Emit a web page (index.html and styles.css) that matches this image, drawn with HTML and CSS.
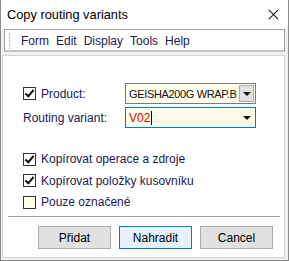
FILE: index.html
```html
<!DOCTYPE html>
<html lang="cs">
<head>
  <meta charset="UTF-8">
  <title>Copy routing variants</title>
  <link rel="stylesheet" href="styles.css">
</head>
<body>
  <div class="window">
    <div class="title-bar">
      <span class="title">Copy routing variants</span>
      <svg class="close" viewBox="0 0 12 12">
        <path d="M1 1L11 11M11 1L1 11"/>
      </svg>
    </div>
    <div class="menu-area">
      <div class="menu-bar">
        <span class="grip"></span>
        <span class="menu-item">Form</span>
        <span class="menu-item">Edit</span>
        <span class="menu-item">Display</span>
        <span class="menu-item">Tools</span>
        <span class="menu-item">Help</span>
      </div>
    </div>
    <div class="panel">
      <div class="form-row">
        <label class="field-label"><span class="check checked"></span>Product:</label>
        <div class="combo">
          <span class="combo-text tight">GEISHA200G WRAP.B</span>
          <span class="combo-btn"><span class="arrow"></span></span>
        </div>
      </div>
      <div class="form-row">
        <label class="field-label">Routing variant:</label>
        <div class="combo focused">
          <span class="combo-text red">V02<span class="caret"></span></span>
          <span class="combo-btn flat"><span class="arrow"></span></span>
        </div>
      </div>

      <div class="options">
        <label class="option"><span class="check checked"></span>Kopírovat operace a zdroje</label>
        <label class="option"><span class="check checked"></span>Kopírovat položky kusovníku</label>
        <label class="option"><span class="check empty"></span>Pouze označené</label>
      </div>

      <div class="separator"></div>

      <div class="buttons">
        <button class="btn">Přidat</button>
        <button class="btn default">Nahradit</button>
        <button class="btn">Cancel</button>
      </div>
    </div>
  </div>
</body>
</html>
```

FILE: styles.css
```css
* {
  box-sizing: border-box;
  margin: 0;
  padding: 0;
}

body {
  font-family: 'Liberation Sans', Arial, sans-serif;
  font-size: 12px;
  background: #fff;
}

.window {
  width: 289px;
  height: 261px;
  border: 1px solid #8c8c8c;
  border-top: none;
  background: #f0f0f0;
  display: flex;
  flex-direction: column;
}

.title-bar {
  flex: none;
  height: 29px;
  background: #fff;
  display: flex;
  align-items: center;
  justify-content: space-between;
  padding: 0 9px 1px 6px;
}

.title {
  font-size: 12.8px;
  color: #000;
}

.close {
  width: 11px;
  height: 11px;
  stroke: #111;
  stroke-width: 1.1;
  fill: none;
}

.menu-area {
  flex: none;
  padding: 0 3px;
}

.menu-bar {
  height: 23px;
  background: #fff;
  border: 1px solid #a0a0a0;
  border-bottom: 2px solid #c4c4c4;
  display: flex;
  align-items: center;
  padding: 2px 0 0 4px;
}

.grip {
  width: 1px;
  height: 16px;
  border-left: 1px dotted #a8a8a8;
  margin-right: 11px;
}

.menu-item {
  color: #1a1a4e;
  margin-right: 7px;
}

.panel {
  flex: 1;
  margin: 3px 3px 2px 1px;
  background: #fff;
  border: 1px solid #d4d4d4;
  padding: 27px 0 0 20px;
  display: flex;
  flex-direction: column;
}

.form-row {
  display: flex;
  align-items: center;
  height: 21px;
  margin-bottom: 3px;
}

.field-label {
  width: 102px;
  display: flex;
  align-items: center;
  color: #1a1a4e;
}

.check {
  width: 13px;
  height: 13px;
  border: 1px solid #333;
  background: #fff;
  margin-right: 5px;
  position: relative;
  flex: none;
}

.check.checked::after {
  content: '';
  position: absolute;
  left: 3px;
  top: 0;
  width: 3px;
  height: 7px;
  border: solid #111;
  border-width: 0 2px 2px 0;
  transform: rotate(40deg);
}

.check.empty {
  background: #fefde8;
}

.combo {
  width: 131px;
  height: 21px;
  border: 1px solid #7a7a7a;
  background: #fffeea;
  display: flex;
  align-items: center;
  gap: 1px;
  padding: 0 1px 0 3px;
}

.combo.focused {
  border-color: #0078d7;
}

.combo-text {
  flex: 1;
  color: #111;
  white-space: nowrap;
  overflow: hidden;
  display: flex;
  align-items: center;
}

.combo-text.tight {
  font-size: 11px;
  letter-spacing: -0.35px;
}

.combo-text.red {
  color: #e80000;
}

.caret {
  width: 1px;
  height: 14px;
  background: #000;
  margin-left: 1px;
}

.combo-btn {
  width: 15px;
  height: 17px;
  background: #e1e1e1;
  border: 1px solid #adadad;
  display: flex;
  align-items: center;
  justify-content: center;
  flex: none;
}

.combo-btn.flat {
  background: transparent;
  border-color: transparent;
}

.arrow {
  width: 0;
  height: 0;
  border-left: 4px solid transparent;
  border-right: 4px solid transparent;
  border-top: 4px solid #111;
}

.options {
  margin-top: 21px;
  display: flex;
  flex-direction: column;
  gap: 7.5px;
}

.option {
  display: flex;
  align-items: center;
  color: #1a1a4e;
  height: 14px;
}

.separator {
  height: 1px;
  background: #a0a0a0;
  margin: 7px 4px 0 -15px;
}

.buttons {
  display: flex;
  gap: 8px;
  padding-left: 15px;
  margin-top: 9px;
}

.btn {
  width: 73px;
  height: 23px;
  font-family: inherit;
  font-size: 12px;
  color: #000;
  background: #e1e1e1;
  border: 1px solid #adadad;
}

.btn.default {
  background: #e5f1fb;
  border-color: #0078d7;
}
```
